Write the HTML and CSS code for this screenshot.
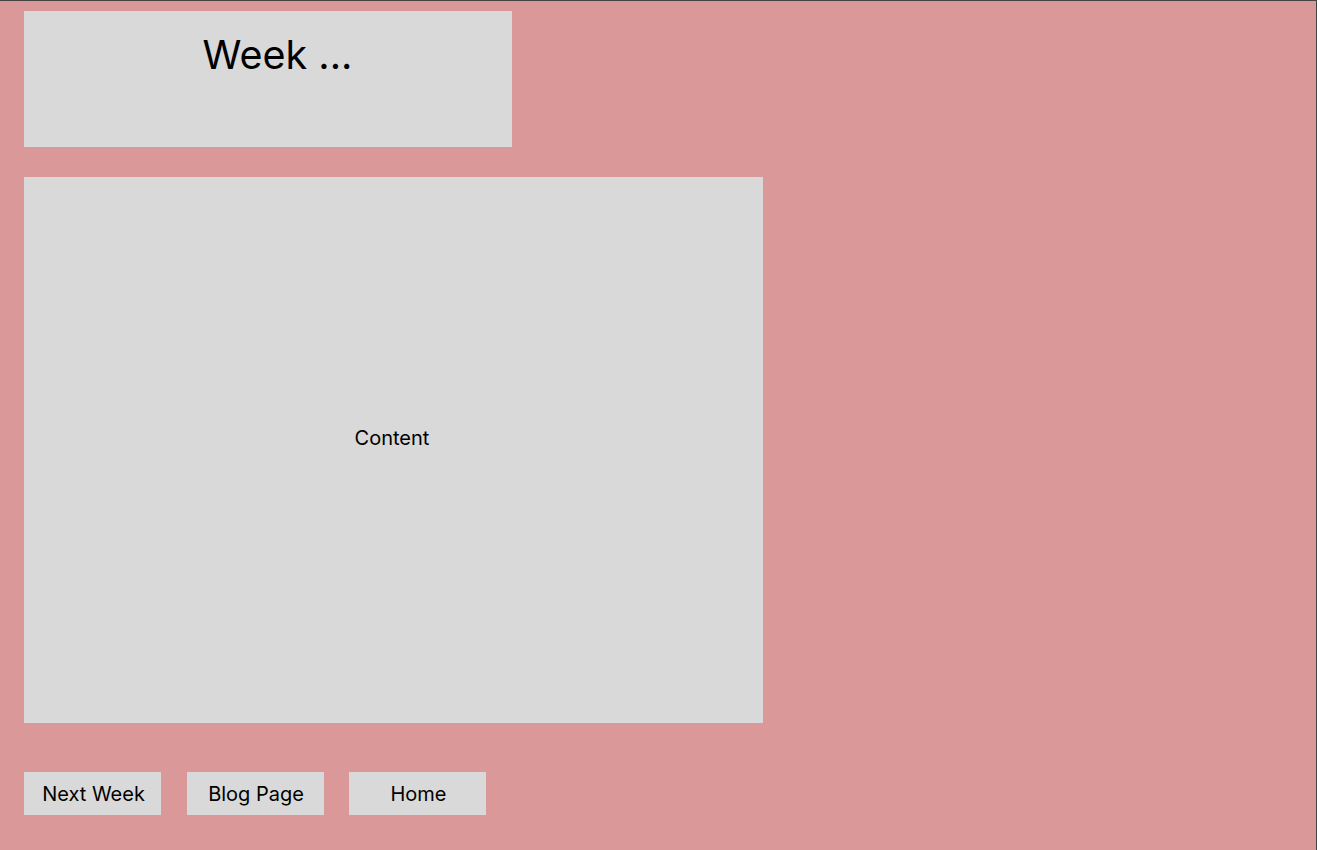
FILE: index.html
```html
<!DOCTYPE html>
<html lang="en">
<head>
<meta charset="utf-8">
<title>Week</title>
<link rel="stylesheet" href="styles.css">
</head>
<body>
<div class="frame">
  <header class="header-box"><h1 class="title">Week ...</h1></header>
  <main class="content-box"><p class="content-text">Content</p></main>
  <nav class="nav">
    <a class="btn" href="#">Next Week</a>
    <a class="btn" href="#">Blog Page</a>
    <a class="btn" href="#">Home</a>
  </nav>
</div>
</body>
</html>
```
FILE: styles.css
```css
html, body {
  margin: 0;
  padding: 0;
  height: 100%;
  background: #da9898;
}
.frame {
  box-sizing: border-box;
  height: 850px;
  border-top: 1px solid #444;
  border-right: 1px solid #444;
  background: #da9898;
  padding: 10px 0 0 24px;
  display: flex;
  flex-direction: column;
  align-items: flex-start;
  font-family: Inter, "Liberation Sans", sans-serif;
  color: #000;
}
.header-box {
  box-sizing: border-box;
  width: 488px;
  height: 136px;
  background: #d9d9d9;
  padding: 20px 0 0 19px;
  text-align: center;
}
.title {
  margin: 0;
  font-size: 39.5px;
  font-weight: 400;
  line-height: 48px;
}
.content-box {
  box-sizing: border-box;
  margin-top: 30px;
  width: 739px;
  height: 546px;
  background: #d9d9d9;
  display: flex;
  align-items: center;
  justify-content: center;
  padding: 0 3px 24px 0;
}
.content-text {
  margin: 0;
  font-size: 20px;
  line-height: 24px;
}
.nav {
  margin-top: 49px;
  display: flex;
  gap: 25.5px;
}
.btn {
  box-sizing: border-box;
  width: 137px;
  height: 43px;
  background: #d9d9d9;
  display: flex;
  align-items: center;
  justify-content: center;
  padding-left: 2px;
  font-size: 20px;
  color: #000;
  text-decoration: none;
}
```
